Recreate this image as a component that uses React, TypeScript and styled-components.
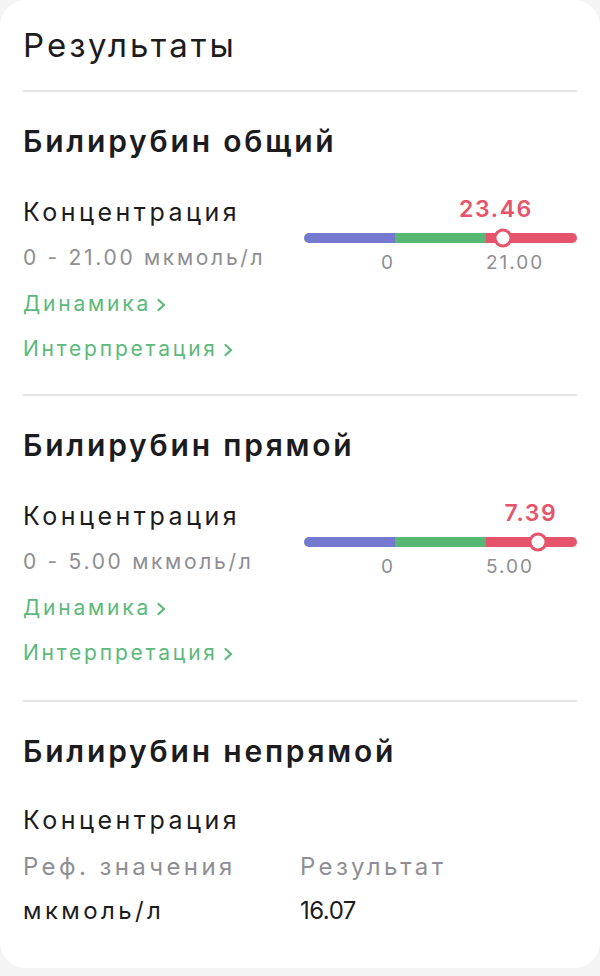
import React from "react";
import styled, { createGlobalStyle } from "styled-components";

const GlobalStyle = createGlobalStyle`
  html, body { margin: 0; padding: 0; background: #f4f4f5; }
  body { font-family: Inter, "Noto Sans", "Liberation Sans", sans-serif; -webkit-font-smoothing: antialiased; }
  * { box-sizing: border-box; }
`;

const Card = styled.div`
  width: 600px;
  height: 968px;
  background: #ffffff;
  border-radius: 26px;
  padding: 25px 23px 0 23px;
  color: #1c1c1e;
`;

const Title = styled.h1`
  margin: 0;
  font-size: 33px;
  line-height: 40px;
  font-weight: 400;
  letter-spacing: 3px;
`;

const Divider = styled.div<{ $top: number }>`
  height: 2px;
  background: #e6e6e8;
  margin-top: ${(p) => p.$top}px;
`;

const Section = styled.section`
  padding-top: 31px;
`;

const SectionTitle = styled.h2`
  margin: 0;
  font-size: 30px;
  line-height: 36px;
  font-weight: 600;
  letter-spacing: 2.8px;
`;

const Row = styled.div`
  display: grid;
  grid-template-columns: 1fr 273px;
  column-gap: 8px;
  margin-top: 37px;
  align-items: start;
`;

const Label = styled.div<{ $mt?: number }>`
  font-size: 25px;
  line-height: 32px;
  font-weight: 400;
  letter-spacing: 3.5px;
  color: #1c1c1e;
  margin-top: ${(p) => p.$mt ?? 0}px;
`;

const Range = styled.div`
  font-size: 21px;
  line-height: 28px;
  letter-spacing: 2.7px;
  color: #8e8e93;
  margin-top: 16px;
  white-space: nowrap;
`;

const Link = styled.a<{ $mt: number }>`
  display: flex;
  align-items: center;
  font-size: 21px;
  line-height: 28px;
  letter-spacing: 2.8px;
  color: #5cb97a;
  text-decoration: none;
  margin-top: ${(p) => p.$mt}px;
`;

const ChevronIcon = styled.svg`
  width: 11px;
  height: 14px;
  margin-left: 5px;
  margin-top: 1px;
`;

const Gauge = styled.div`
  display: flex;
  flex-direction: column;
`;

const ValueRow = styled.div`
  position: relative;
  height: 26px;
`;

const Value = styled.span`
  position: absolute;
  top: 0;
  font-size: 23px;
  line-height: 26px;
  font-weight: 600;
  letter-spacing: 1.6px;
  color: #e5546b;
  transform: translateX(calc(-50% - 7px));
  white-space: nowrap;
`;

const Track = styled.div`
  position: relative;
  display: grid;
  grid-template-columns: 1fr 1fr 1fr;
  height: 10px;
  margin-top: 11px;
`;

const Segment = styled.div<{ $color: string; $pos: "l" | "m" | "r" }>`
  background: ${(p) => p.$color};
  border-radius: ${(p) =>
    p.$pos === "l" ? "5px 0 0 5px" : p.$pos === "r" ? "0 5px 5px 0" : "0"};
`;

const Thumb = styled.div`
  position: absolute;
  top: 50%;
  width: 19px;
  height: 19px;
  border-radius: 50%;
  background: #ffffff;
  border: 3.5px solid #e5546b;
  transform: translate(-50%, -50%);
`;

const Ticks = styled.div`
  display: grid;
  grid-template-columns: 1fr 1fr 1fr;
  margin-top: 9px;
  font-size: 19px;
  line-height: 22px;
  color: #8e8e93;
`;

const Tick = styled.span<{ $align: "left" | "right" }>`
  text-align: ${(p) => p.$align};
  letter-spacing: ${(p) => (p.$align === "left" ? "2px" : "0")};
  padding-right: ${(p) => (p.$align === "right" ? "2px" : "0")};
`;

const Chevron = () => (
  <ChevronIcon viewBox="0 0 11 14">
    <path d="M2.5 2 L8 7 L2.5 12" fill="none" stroke="currentColor" strokeWidth="2.3" strokeLinecap="round" strokeLinejoin="round" />
  </ChevronIcon>
);

const TableGrid = styled.div`
  display: grid;
  grid-template-columns: 277px 1fr;
  margin-top: 17px;
  row-gap: 16px;
`;

const Cell = styled.div<{ $muted?: boolean; $num?: boolean }>`
  font-size: 24px;
  line-height: 28px;
  letter-spacing: ${(p) => (p.$num ? "-0.5px" : "3.4px")};
  color: ${(p) => (p.$muted ? "#8e8e93" : "#1c1c1e")};
`;

type Item = {
  title: string;
  range: string;
  value: string;
  pos: number;
  max: string;
  gap: number;
};

const items: Item[] = [
  { title: "Билирубин общий", range: "0 - 21.00 мкмоль/л", value: "23.46", pos: 72.9, max: "21.00", gap: 31 },
  { title: "Билирубин прямой", range: "0 - 5.00 мкмоль/л", value: "7.39", pos: 85.7, max: "5.00", gap: 33 },
];

const ResultBlock = ({ item }: { item: Item }) => (
  <>
    <Section>
      <SectionTitle>{item.title}</SectionTitle>
      <Row>
        <div>
          <Label>Концентрация</Label>
          <Range>{item.range}</Range>
        </div>
        <Gauge>
          <ValueRow>
            <Value style={{ left: `${item.pos}%` }}>{item.value}</Value>
          </ValueRow>
          <Track>
            <Segment $color="#7478cf" $pos="l" />
            <Segment $color="#58b873" $pos="m" />
            <Segment $color="#e5546b" $pos="r" />
            <Thumb style={{ left: `${item.pos}%` }} />
          </Track>
          <Ticks>
            <Tick $align="right">0</Tick>
            <span />
            <Tick $align="left">{item.max}</Tick>
          </Ticks>
        </Gauge>
      </Row>
      <Link $mt={16}>
        Динамика
        <Chevron />
      </Link>
      <Link $mt={17}>
        Интерпретация
        <Chevron />
      </Link>
    </Section>
    <Divider $top={item.gap} />
  </>
);

export default function App() {
  return (
    <>
      <GlobalStyle />
      <Card>
        <Title>Результаты</Title>
        <Divider $top={25} />
        {items.map((it) => (
          <ResultBlock key={it.title} item={it} />
        ))}
        <Section>
          <SectionTitle>Билирубин непрямой</SectionTitle>
          <Label $mt={35}>Концентрация</Label>
          <TableGrid>
            <Cell $muted>Реф. значения</Cell>
            <Cell $muted>Результат</Cell>
            <Cell>мкмоль/л</Cell>
            <Cell $num>16.07</Cell>
          </TableGrid>
        </Section>
      </Card>
    </>
  );
}
